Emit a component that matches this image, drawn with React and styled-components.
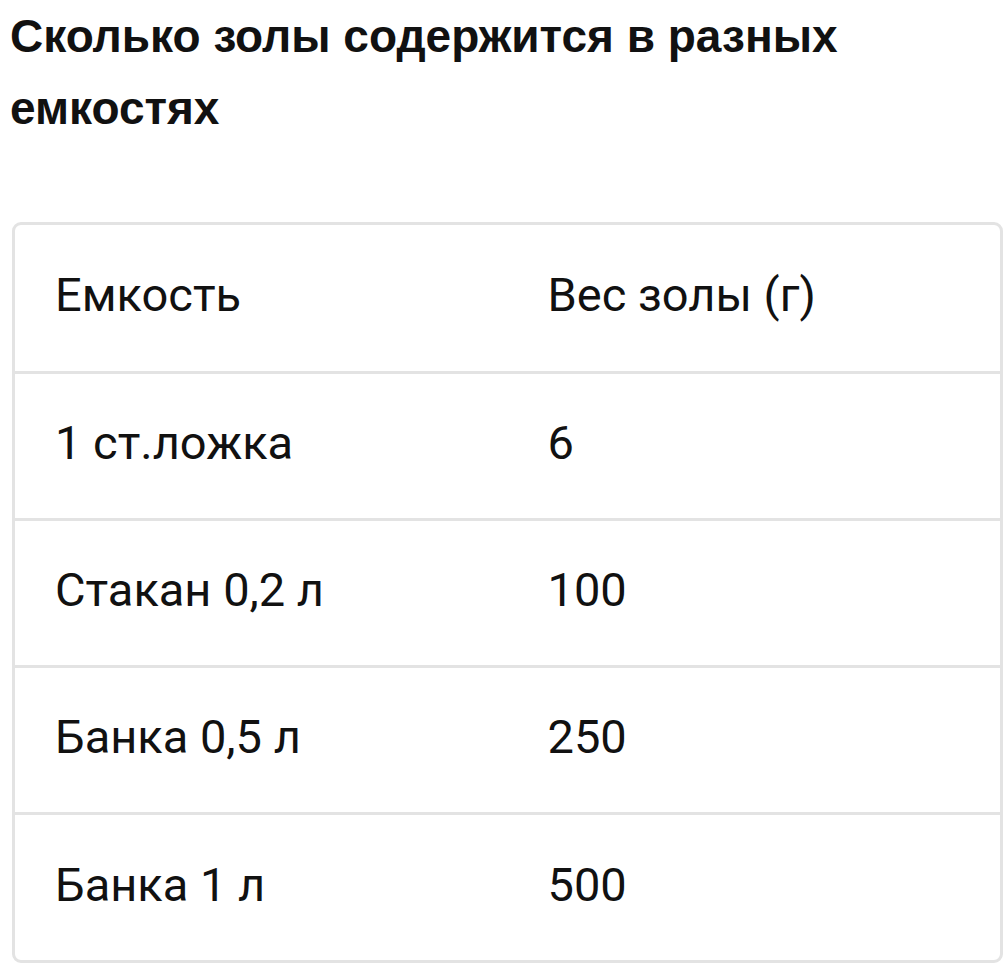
import React from "react";
import styled, { createGlobalStyle } from "styled-components";

const GlobalStyle = createGlobalStyle`
  body {
    margin: 0;
    background: #ffffff;
    font-family: Roboto, "Noto Sans", sans-serif;
    color: #111111;
  }
`;

const Page = styled.div`
  width: 1005px;
`;

const Title = styled.h2`
  margin: 0 0 0 10px;
  width: 900px;
  font-family: "Liberation Sans", Arial, sans-serif;
  font-size: 46px;
  font-weight: 700;
  line-height: 72px;
  color: #111111;
`;

const TableWrap = styled.div`
  margin: 78px 0 0 12px;
  width: 985px;
  border: 3px solid #e3e3e3;
  border-radius: 9px;
  overflow: hidden;
`;

const Table = styled.table`
  width: 100%;
  border-collapse: collapse;
  table-layout: fixed;
`;

const Row = styled.tr`
  height: 147px;
  border-top: ${({ $first }) => ($first ? "none" : "3px solid #e3e3e3")};
`;

const Cell = styled.td`
  padding: 0 0 6px 40px;
  font-size: 47px;
  font-weight: 400;
  color: #111111;
  vertical-align: middle;
`;

const rows = [
  ["Емкость", "Вес золы (г)"],
  ["1 ст.ложка", "6"],
  ["Стакан 0,2 л", "100"],
  ["Банка 0,5 л", "250"],
  ["Банка 1 л", "500"],
];

const App = () => {
  return (
    <Page>
      <GlobalStyle />
      <Title>Сколько золы содержится в разных емкостях</Title>
      <TableWrap>
        <Table>
          <tbody>
            {rows.map((r, i) => (
              <Row key={i} $first={i === 0}>
                <Cell>{r[0]}</Cell>
                <Cell>{r[1]}</Cell>
              </Row>
            ))}
          </tbody>
        </Table>
      </TableWrap>
    </Page>
  );
};

export default App;
